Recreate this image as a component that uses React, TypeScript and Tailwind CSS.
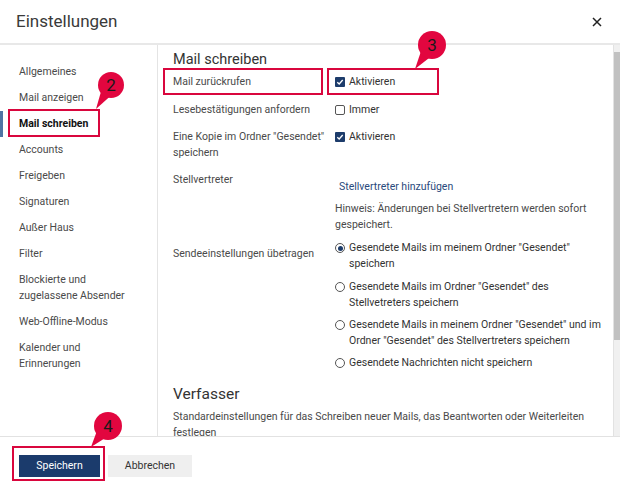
import React from "react";

const font = { fontFamily: "Roboto, 'Noto Sans', Arial, sans-serif" };

function Checkbox({ checked }: { checked: boolean }) {
  if (checked) {
    return (
      <span className="flex h-[10px] w-[10px] shrink-0 items-center justify-center rounded-[1px] bg-[#1d3c6b]">
        <svg width="8" height="8" viewBox="0 0 8 8">
          <path d="M1.3 4.2 L3.2 6 L6.7 2" fill="none" stroke="#fff" strokeWidth="1.3" />
        </svg>
      </span>
    );
  }
  return <span className="h-[10px] w-[10px] shrink-0 rounded-[2px] border border-[#555] bg-white" />;
}

function Radio({ checked }: { checked: boolean }) {
  return (
    <span className="mt-[3px] flex h-[10px] w-[10px] shrink-0 items-center justify-center rounded-full border border-[#555] bg-white">
      {checked && <span className="h-[5px] w-[5px] rounded-full bg-[#1d3c6b]" />}
    </span>
  );
}

const navItems: { label: string[]; active?: boolean }[] = [
  { label: ["Allgemeines"] },
  { label: ["Mail anzeigen"] },
  { label: ["Mail schreiben"], active: true },
  { label: ["Accounts"] },
  { label: ["Freigeben"] },
  { label: ["Signaturen"] },
  { label: ["Außer Haus"] },
  { label: ["Filter"] },
  { label: ["Blockierte und", "zugelassene Absender"] },
  { label: ["Web-Offline-Modus"] },
  { label: ["Kalender und", "Erinnerungen"] },
];

function Badge({ cx, cy, r, tx, ty, n }: { cx: number; cy: number; r: number; tx: number; ty: number; n: string }) {
  const dx = tx - cx;
  const dy = ty - cy;
  const len = Math.sqrt(dx * dx + dy * dy);
  const ux = dx / len;
  const uy = dy / len;
  const px = -uy;
  const py = ux;
  const bx = cx + ux * r * 0.6;
  const by = cy + uy * r * 0.6;
  const w = r * 0.45;
  const pts = `${bx + px * w},${by + py * w} ${bx - px * w},${by - py * w} ${tx},${ty}`;
  return (
    <g>
      <polygon points={pts} fill="#e2063f" />
      <circle cx={cx} cy={cy} r={r} fill="#e2063f" />
      <text x={cx} y={cy + 6} textAnchor="middle" fontSize="17" fill="#1a1a1a" style={font}>
        {n}
      </text>
    </g>
  );
}

export default function App() {
  return (
    <div className="relative flex h-[490px] w-[620px] flex-col overflow-hidden bg-white text-[#4a4a4a]" style={font}>
      {/* Header */}
      <div className="flex h-[43px] shrink-0 items-center justify-between pl-[16px] pr-[18px]">
        <span className="text-[17px] text-[#3a3a3a]">Einstellungen</span>
        <svg width="10" height="10" viewBox="0 0 10 10">
          <path d="M1 1 L9 9 M9 1 L1 9" stroke="#222" strokeWidth="1.5" />
        </svg>
      </div>
      <div className="h-[2px] shrink-0 bg-[#e8e8e8]" />

      {/* Body */}
      <div className="flex h-[391px] shrink-0">
        {/* Nav */}
        <div className="flex w-[158px] shrink-0 flex-col border-r border-[#e4e4e4] pt-[14px] text-[10.5px] leading-[16px]">
          {navItems.map((it) => (
            <div
              key={it.label.join(" ")}
              className={
                it.active
                  ? "flex flex-col border-l-[3px] border-[#4f74a3] py-[5px] pl-[16px] font-bold text-[#111]"
                  : "flex flex-col py-[5px] pl-[19px] text-[#4a4a4a]"
              }
            >
              {it.label.map((l) => (
                <span key={l}>{l}</span>
              ))}
            </div>
          ))}
        </div>

        {/* Content */}
        <div className="flex flex-1 overflow-hidden">
          <div className="flex flex-1 flex-col overflow-hidden pl-[15px] pt-[5px] text-[10.5px] leading-[16px]">
            <div className="text-[14.5px] leading-[20px] text-[#333]">Mail schreiben</div>

            <div className="mt-[4px] flex">
              <div className="w-[162px] shrink-0">Mail zurückrufen</div>
              <div className="flex items-center gap-[4px] text-[#333]">
                <Checkbox checked />
                <span>Aktivieren</span>
              </div>
            </div>

            <div className="mt-[12px] flex">
              <div className="w-[162px] shrink-0">Lesebestätigungen anfordern</div>
              <div className="flex items-center gap-[4px] text-[#333]">
                <Checkbox checked={false} />
                <span>Immer</span>
              </div>
            </div>

            <div className="mt-[11px] flex">
              <div className="w-[162px] shrink-0">
                Eine Kopie im Ordner "Gesendet"
                <br />
                speichern
              </div>
              <div className="flex h-[16px] items-center gap-[4px] text-[#333]">
                <Checkbox checked />
                <span>Aktivieren</span>
              </div>
            </div>

            <div className="mt-[11px] flex">
              <div className="w-[162px] shrink-0">Stellvertreter</div>
              <div className="flex flex-col">
                <span className="mt-[7px] pl-[4px] text-[#2a4a7c]">Stellvertreter hinzufügen</span>
                <span className="mt-[6px] w-[260px]">
                  Hinweis: Änderungen bei Stellvertretern werden sofort gespeichert.
                </span>
              </div>
            </div>

            <div className="mt-[7px] flex">
              <div className="w-[162px] shrink-0 pt-[6px]">Sendeeinstellungen übetragen</div>
              <div className="flex flex-col gap-[6px] text-[#333]">
                <div className="mb-[1px] flex gap-[4px]">
                  <Radio checked />
                  <span>
                    Gesendete Mails im meinem Ordner "Gesendet"
                    <br />
                    speichern
                  </span>
                </div>
                <div className="flex gap-[4px]">
                  <Radio checked={false} />
                  <span>
                    Gesendete Mails im Ordner "Gesendet" des
                    <br />
                    Stellvetreters speichern
                  </span>
                </div>
                <div className="flex gap-[4px]">
                  <Radio checked={false} />
                  <span>
                    Gesendete Mails in meinem Ordner "Gesendet" und im
                    <br />
                    Ordner "Gesendet" des Stellvertreters speichern
                  </span>
                </div>
                <div className="flex gap-[4px]">
                  <Radio checked={false} />
                  <span>Gesendete Nachrichten nicht speichern</span>
                </div>
              </div>
            </div>

            <div className="mt-[13px] text-[15.5px] leading-[20px] text-[#333]">Verfasser</div>
            <div className="mt-[5px]">
              Standardeinstellungen für das Schreiben neuer Mails, das Beantworten oder Weiterleiten
              <br />
              festlegen
            </div>
          </div>

          {/* Scrollbar */}
          <div className="flex w-[7px] shrink-0 flex-col border-l border-[#e2e2e2] bg-[#f0f0f0] pt-[7px]">
            <div className="h-[288px] w-full bg-[#c1c1c1]" />
          </div>
        </div>
      </div>

      {/* Footer */}
      <div className="flex flex-1 items-start gap-[8px] border-t border-[#e2e2e2] pl-[19px] pt-[18px]">
        <button className="h-[22px] w-[81px] bg-[#1b3b6c] text-[10.5px] text-white">Speichern</button>
        <button className="h-[22px] w-[84px] bg-[#efefef] text-[10.5px] text-[#333]">Abbrechen</button>
      </div>

      {/* Annotations */}
      <div className="absolute left-[8px] top-[109px] h-[28px] w-[92px] border-2 border-[#d9063d]" />
      <div className="absolute left-[163px] top-[68px] h-[27px] w-[160px] border-2 border-[#d9063d]" />
      <div className="absolute left-[327px] top-[68px] h-[27px] w-[112px] border-2 border-[#d9063d]" />
      <div className="absolute left-[12px] top-[446px] h-[35px] w-[93px] border-2 border-[#d9063d]" />

      <svg className="pointer-events-none absolute left-0 top-0" width="620" height="490">
        <Badge cx={111} cy={85} r={13} tx={96} ty={109} n="2" />
        <Badge cx={432} cy={45} r={14} tx={415} ty={69} n="3" />
        <Badge cx={108} cy={426} r={14} tx={91} ty={447} n="4" />
      </svg>
    </div>
  );
}
